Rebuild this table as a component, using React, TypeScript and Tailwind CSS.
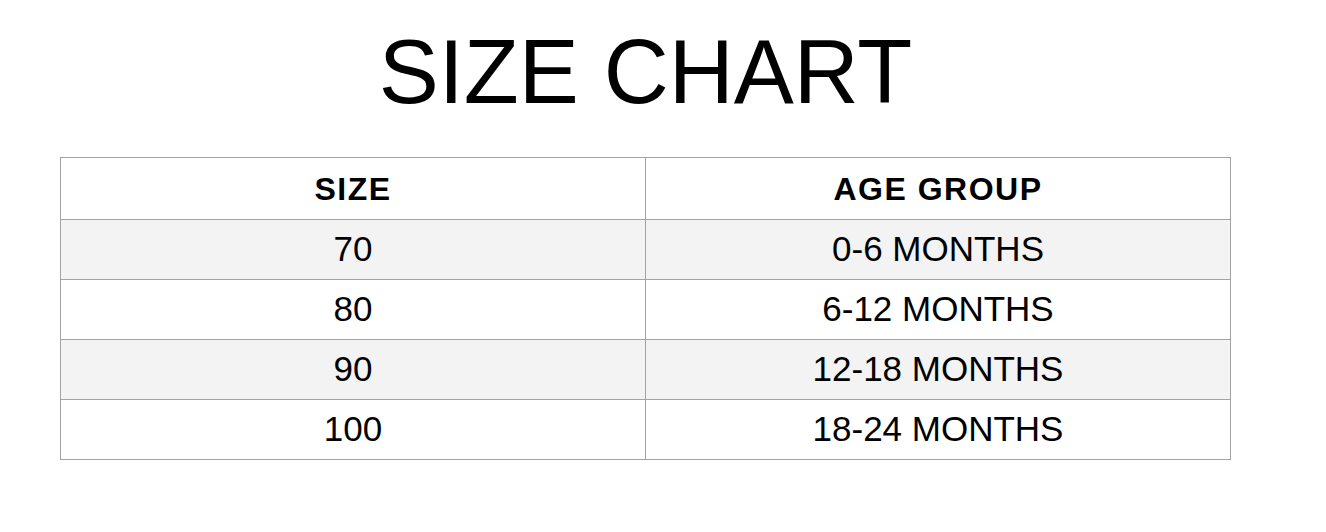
const rows = [
  { size: "70", age: "0-6 MONTHS" },
  { size: "80", age: "6-12 MONTHS" },
  { size: "90", age: "12-18 MONTHS" },
  { size: "100", age: "18-24 MONTHS" },
];

export default function App() {
  return (
    <div className="min-h-[532px] w-[1326px] bg-white font-['Liberation_Sans',Arial,sans-serif] text-black">
      <div className="ml-[60px] w-[1171px] pt-[22px]">
        <h1 className="text-center text-[90px] leading-[100px] font-normal">SIZE CHART</h1>
        <table className="mt-[35px] w-full table-fixed border-collapse">
          <thead>
            <tr className="h-[62px]">
              <th className="border border-[#a3a3a3] text-[32px] font-bold tracking-[1.5px]">SIZE</th>
              <th className="border border-[#a3a3a3] text-[32px] font-bold tracking-[1.5px]">AGE GROUP</th>
            </tr>
          </thead>
          <tbody>
            {rows.map((r, i) => (
              <tr key={r.size} className={`h-[60px] ${i % 2 === 0 ? "bg-[#f3f3f3]" : "bg-white"}`}>
                <td className="border border-[#a3a3a3] text-center text-[35px]">{r.size}</td>
                <td className="border border-[#a3a3a3] text-center text-[35px]">{r.age}</td>
              </tr>
            ))}
          </tbody>
        </table>
      </div>
    </div>
  );
}
